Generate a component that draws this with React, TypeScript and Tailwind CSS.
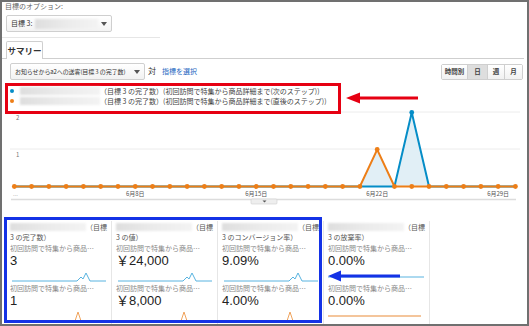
import React from "react";

const jp = "font-['Noto_Sans_CJK_JP','Noto_Sans',sans-serif]";
const num = "font-['Liberation_Sans','Noto_Sans_CJK_JP',sans-serif]";

const X0 = 12.3;
const DX = 17.28;
const BASE = 76.5;
const UNIT = 37;
const px = (i: number) => X0 + i * DX;

const orange = Array.from({ length: 30 }, (_, i) => (i === 21 ? 1 : 0));
const blue = Array.from({ length: 30 }, (_, i) => (i === 23 ? 2 : 0));
const py = (v: number) => BASE - v * UNIT;

function Blur({ w, h = 8 }: { w: number; h?: number }) {
  return (
    <div
      className="shrink-0 bg-linear-to-r from-[#dedede] via-[#ebebeb] to-[#f3f3f3] blur-[1px]"
      style={{ width: w, height: h }}
    />
  );
}

function Caret() {
  return (
    <svg width="6" height="4" viewBox="0 0 6 4" className="shrink-0">
      <path d="M0 0 H6 L3 4 Z" fill="#555" />
    </svg>
  );
}

function Chart() {
  const line = (d: number[]) => d.map((v, i) => `${i ? "L" : "M"}${px(i)} ${py(v)}`).join(" ");
  const dates: [number, string][] = [
    [7, "6月8日"],
    [14, "6月15日"],
    [21, "6月22日"],
    [28, "6月29日"],
  ];
  return (
    <svg width="525" height="111" className={"-mt-[4px] block " + jp}>
      <line x1="8" x2="518" y1="2" y2="2" stroke="#ececec" />
      <line x1="8" x2="518" y1="39" y2="39" stroke="#ececec" />
      <text x="14" y="10" fontSize="6" fill="#777">2</text>
      <text x="14" y="47" fontSize="6" fill="#777">1</text>
      <path
        d={`M${px(20)} ${BASE} L${px(21)} ${py(1)} L${px(22)} ${BASE} Z`}
        fill="#e1eff6"
      />
      <path
        d={`M${px(22)} ${BASE} L${px(23)} ${py(2)} L${px(24)} ${BASE} Z`}
        fill="#e1eff6"
      />
      <path d={line(blue)} stroke="#058dc7" strokeWidth="2" fill="none" />
      <circle cx={px(23)} cy={py(2)} r="2.4" fill="#058dc7" />
      <path d={line(orange)} stroke="#ed7e17" strokeWidth="2" fill="none" />
      {orange.map((v, i) => (
        <circle key={i} cx={px(i)} cy={py(v)} r="2.4" fill="#ed7e17" />
      ))}
      <text x="11" y="86" fontSize="6" fill="#aaa">...</text>
      {dates.map(([i, t]) => (
        <text key={t} x={px(i)} y="85.5" fontSize="6" fill="#555" textAnchor="middle">
          {t}
        </text>
      ))}
      <line x1="9" x2="514" y1="89.5" y2="89.5" stroke="#dcdcdc" strokeWidth="1.5" />
      <rect x="249" y="89" width="26" height="5" rx="1" fill="#eeeeee" stroke="#cfcfcf" strokeWidth="0.6" />
      <path d="M260.5 90.6 H264.5 L262.5 92.6 Z" fill="#555" />
    </svg>
  );
}

type CardData = { title: string; v1: string; v2: string; flat?: boolean };

const cards: CardData[] = [
  { title: "3 の完了数）", v1: "3", v2: "1" },
  { title: "3 の値）", v1: "￥24,000", v2: "￥8,000" },
  { title: "3 のコンバージョン率）", v1: "9.09%", v2: "4.00%" },
  { title: "3 の放棄率）", v1: "0.00%", v2: "0.00%", flat: true },
];

function Card({ c }: { c: CardData }) {
  const label = "初回訪問で特集から商品…";
  return (
    <div className="w-[106px] shrink-0 border-r border-[#e6e6e6] pl-[4px] pr-[3px] pt-[1px]">
      <div className="flex h-[10px] items-center">
        <Blur w={76} />
        <span className={"text-[7px] leading-[10px] text-[#555] " + jp}>（目標</span>
      </div>
      <div className={"text-[7px] leading-[10px] text-[#555] " + jp}>{c.title}</div>
      <div className={"mt-[1px] text-[7px] leading-[10px] text-[#8a8a8a] " + jp}>{label}</div>
      <div className={"mt-[1px] text-[13px] leading-[14px] text-[#222] " + num}>{c.v1}</div>
      <svg width="96" height="14" className="block">
        {c.flat ? (
          <line x1="0" x2="96" y1="9" y2="9" stroke="#58b3e0" strokeWidth="1" />
        ) : (
          <path
            d="M2 13 H67 L71 9 L73 11 L76 5 L80 13 H96"
            stroke="#58b3e0"
            strokeWidth="1"
            fill="none"
          />
        )}
      </svg>
      <div className={"mt-[1px] text-[7px] leading-[10px] text-[#8a8a8a] " + jp}>{label}</div>
      <div className={"mt-[1px] text-[13px] leading-[14px] text-[#222] " + num}>{c.v2}</div>
      <svg width="96" height="14" className="block">
        {c.flat ? (
          <line x1="0" x2="93" y1="8" y2="8" stroke="#f0b27a" strokeWidth="1.5" />
        ) : (
          <path d="M2 13 H65 L68 4 L71 13 H96" stroke="#f0a35c" strokeWidth="1" fill="none" />
        )}
      </svg>
    </div>
  );
}

export default function App() {
  return (
    <div className="relative h-[326px] w-[529px] overflow-hidden border-2 border-[#707070] bg-white">
      <div className={"pl-[3px] text-[7px] leading-[9px] text-[#666] " + jp}>目標のオプション:</div>

      <div className="ml-[4px] mt-[4px] flex h-[17px] w-[106px] items-center rounded-[2px] border border-[#cfcfcf] bg-linear-to-b from-white to-[#f3f3f3] pl-[4px] pr-[4px]">
        <span className={"text-[7px] text-[#333] " + jp}>目標 3:</span>
        <div className="ml-[3px]">
          <Blur w={63} h={10} />
        </div>
        <div className="ml-auto">
          <Caret />
        </div>
      </div>

      <div className="mt-[5px] h-px w-[158px] bg-[#e6e6e6]" />

      <div className="mr-[3px] mt-[3px] flex h-[18px] border-b border-[#cfcfcf]">
        <div className="ml-[4px] flex h-[18px] w-[37px] items-center justify-center rounded-t-[2px] border border-b-0 border-[#cfcfcf] bg-white">
          <span className={"text-[8.5px] font-bold text-[#333] " + jp}>サマリー</span>
        </div>
      </div>

      <div className="mt-[4px] flex h-[18px] items-start">
        <div className="ml-[8px] flex h-[17px] w-[135px] items-center rounded-[2px] border border-[#cfcfcf] bg-linear-to-b from-white to-[#f2f2f2] pl-[4px] pr-[4px]">
          <span className={"whitespace-nowrap text-[6px] tracking-[-0.1px] text-[#333] " + jp}>
            お知らせからa2への送客(目標 3 の完了数)
          </span>
          <div className="ml-auto">
            <Caret />
          </div>
        </div>
        <span className={"ml-[3px] mt-[3px] text-[8px] leading-[10px] text-[#333] " + jp}>対</span>
        <span className={"ml-[6px] mt-[4px] text-[7px] leading-[9px] text-[#1f67c1] " + jp}>指標を選択</span>

        <div className={"ml-auto mr-[4px] mt-[1px] flex h-[16px] rounded-[2px] border border-[#cfcfcf] text-[6.5px] font-bold text-[#444] " + jp}>
          <div className="flex w-[25px] items-center justify-center bg-linear-to-b from-white to-[#f1f1f1]">時間別</div>
          <div className="flex w-[20px] items-center justify-center border-l border-[#cfcfcf] bg-[#dedede]">日</div>
          <div className="flex w-[17px] items-center justify-center border-l border-[#cfcfcf] bg-linear-to-b from-white to-[#f1f1f1]">週</div>
          <div className="flex w-[18px] items-center justify-center border-l border-[#cfcfcf] bg-linear-to-b from-white to-[#f1f1f1]">月</div>
        </div>
      </div>

      <div className="relative z-10 ml-[3px] mt-[2px] h-[31px] w-[336px] border-[3px] border-[#e60012] bg-white pl-[2px]">
        {[
          { dot: "bg-[#058dc7]", step: "次のステップ" },
          { dot: "bg-[#ed7e17]", step: "直後のステップ" },
        ].map((r) => (
          <div key={r.step} className="flex h-[10px] items-center">
            <div className={"h-[4px] w-[4px] shrink-0 rounded-full " + r.dot} />
            <div className="ml-[6px]">
              <Blur w={80} h={8} />
            </div>
            <span className={"whitespace-nowrap text-[7px] leading-[10px] text-[#444] " + jp}>
              （目標 3 の完了数）(初回訪問で特集から商品詳細まで({r.step}))
            </span>
          </div>
        ))}
      </div>

      <Chart />

      <div className="flex h-[103px] pl-[4px]">
        {cards.map((c) => (
          <Card key={c.title} c={c} />
        ))}
      </div>

      {/* annotations */}
      <svg width="74" height="14" className="absolute left-[344px] top-[89px] z-20">
        <path d="M14 5.6 H72 V8.4 H14 Z" fill="#e60012" />
        <path d="M0 7 L14 1.5 V12.5 Z" fill="#e60012" />
      </svg>
      <div className="absolute left-[2px] top-[215px] z-20 h-[106px] w-[318px] border-[3px] border-[#1432e6]" />
      <svg width="74" height="12" className="absolute left-[326px] top-[268px] z-20">
        <path d="M12 4.6 H72 V7.6 H12 Z" fill="#1432e6" />
        <path d="M0 6 L13 0.5 V11.5 Z" fill="#1432e6" />
      </svg>
    </div>
  );
}
